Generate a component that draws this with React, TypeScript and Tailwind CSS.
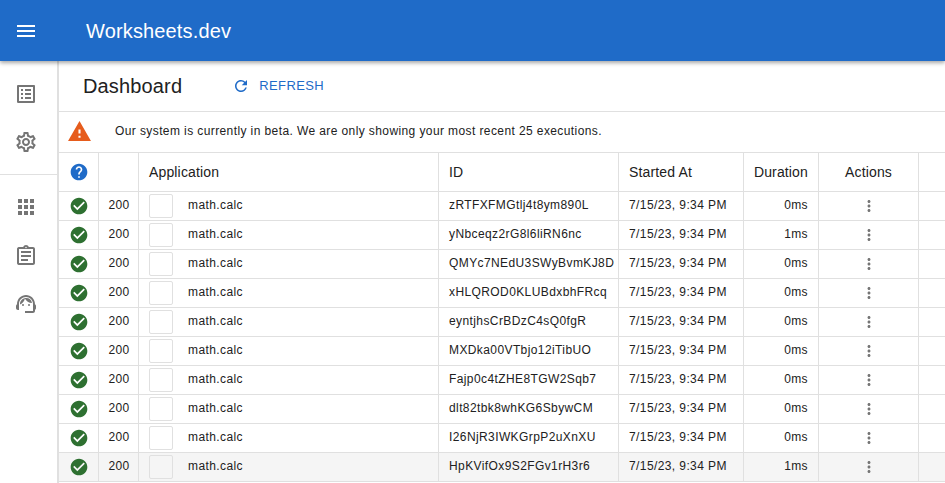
import { MdMenu, MdRefresh, MdWarning, MdHelp, MdCheckCircle, MdMoreVert, MdOutlineListAlt, MdOutlineSettings, MdApps, MdOutlineAssignment, MdOutlineSupportAgent } from "react-icons/md";

const rows = [
  { id: "zRTFXFMGtlj4t8ym890L", ms: "0ms" },
  { id: "yNbceqz2rG8l6liRN6nc", ms: "1ms" },
  { id: "QMYc7NEdU3SWyBvmKJ8D", ms: "0ms" },
  { id: "xHLQROD0KLUBdxbhFRcq", ms: "0ms" },
  { id: "eyntjhsCrBDzC4sQ0fgR", ms: "0ms" },
  { id: "MXDka00VTbjo12iTibUO", ms: "0ms" },
  { id: "Fajp0c4tZHE8TGW2Sqb7", ms: "0ms" },
  { id: "dlt82tbk8whKG6SbywCM", ms: "0ms" },
  { id: "I26NjR3IWKGrpP2uXnXU", ms: "0ms" },
  { id: "HpKVifOx9S2FGv1rH3r6", ms: "1ms" },
];

const grid = "grid grid-cols-[40px_40px_300px_180px_125px_75px_100px_1fr]";
const cell = "flex items-center border-r border-[#e0e0e0] px-2.5";
const narrow = "flex items-center justify-center border-r border-[#e0e0e0] pl-px";

export default function App() {
  return (
    <div className="flex h-[483px] w-[945px] flex-col overflow-hidden bg-white font-['Liberation_Sans',sans-serif] text-[#212121]">
      <header className="relative z-10 flex h-[61px] shrink-0 items-center bg-[#1f6bc8] text-white shadow-[0_2px_4px_rgba(0,0,0,0.35)]">
        <MdMenu className="ml-[14px] text-[24px]" />
        <span className="ml-[48px] text-[20px] tracking-[0.15px]">Worksheets.dev</span>
      </header>

      <div className="flex min-h-0 flex-1">
        <aside className="flex w-[59px] shrink-0 flex-col border-r-2 border-[#e0e0e0] text-[#757575]">
          <div className="flex h-[114px] flex-col items-center gap-6 border-b border-[#e0e0e0] pt-[21px] pr-[6px]">
            <MdOutlineListAlt className="text-[24px]" />
            <MdOutlineSettings className="text-[24px]" />
          </div>
          <div className="flex flex-col items-center gap-[24.5px] pt-5 pr-[6px]">
            <MdApps className="text-[24px]" />
            <MdOutlineAssignment className="text-[24px]" />
            <MdOutlineSupportAgent className="text-[24px]" />
          </div>
        </aside>

        <main className="min-w-0 flex-1">
          <div className="flex h-[51px] items-center border-b border-[#e0e0e0]">
            <h1 className="ml-[24px] text-[20px] tracking-[0.15px]">Dashboard</h1>
            <button className="ml-[50px] flex items-center gap-[9px] text-[13px] tracking-[0.4px] text-[#1f6bc8]">
              <MdRefresh className="text-[18px]" />
              REFRESH
            </button>
          </div>

          <div className="flex h-[41px] items-center border-b border-[#e0e0e0] pb-px">
            <MdWarning className="ml-[8px] text-[25px] text-[#e65c1c]" />
            <p className="mb-0.5 ml-[23px] text-[12px] tracking-[0.4px]">
              Our system is currently in beta. We are only showing your most recent 25 executions.
            </p>
          </div>

          <div className={`${grid} h-[39px] border-b border-[#e0e0e0] text-[14px] tracking-[0.15px]`}>
            <div className={narrow}>
              <MdHelp className="text-[20px] text-[#1f6bc8]" />
            </div>
            <div className={narrow} />
            <div className={cell}>Application</div>
            <div className={cell}>ID</div>
            <div className={cell}>Started At</div>
            <div className={`${cell} justify-end`}>Duration</div>
            <div className={`${cell} justify-center`}>Actions</div>
            <div />
          </div>

          {rows.map((row, i) => (
            <div
              key={row.id}
              className={`${grid} h-[29px] border-b border-[#e0e0e0] text-[12px] tracking-[0.4px] ${i === 9 ? "bg-[#f5f5f5]" : ""}`}
            >
              <div className={narrow}>
                <MdCheckCircle className="text-[20px] text-[#2e7031]" />
              </div>
              <div className={narrow}>
                <span className="mb-0.5">200</span>
              </div>
              <div className={cell}>
                <div className="h-6 w-6 rounded-[2px] border border-[#e0e0e0]" />
                <span className="mb-0.5 ml-[15px]">math.calc</span>
              </div>
              <div className={cell}>
                <span className="mb-0.5">{row.id}</span>
              </div>
              <div className={cell}>
                <span className="mb-0.5">7/15/23, 9:34 PM</span>
              </div>
              <div className={`${cell} justify-end`}>
                <span className="mb-0.5">{row.ms}</span>
              </div>
              <div className={`${cell} justify-center`}>
                <MdMoreVert className="text-[18px] text-[#757575]" />
              </div>
              <div />
            </div>
          ))}
        </main>
      </div>
    </div>
  );
}
